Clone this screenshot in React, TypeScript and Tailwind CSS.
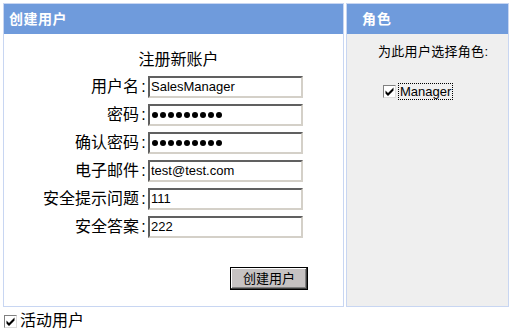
import React from "react";

const cjk = { fontFamily: '"Liberation Sans", "Noto Sans CJK SC", sans-serif' };

function Check({ className = "" }: { className?: string }) {
  return (
    <div
      className={
        "w-[13px] h-[13px] bg-white border border-t-[#808080] border-l-[#808080] border-b-[#dcdcdc] border-r-[#dcdcdc] flex items-center justify-center " +
        className
      }
    >
      <svg width="9" height="9" viewBox="0 0 9 9">
        <path d="M0.5 3.5 L3 6 L8.5 0.5 L8.5 3.5 L3 9 L0.5 6.5 Z" fill="#000" />
      </svg>
    </div>
  );
}

function Field({ label, children }: { label: string; children: React.ReactNode }) {
  return (
    <div className="flex items-center h-[28px]">
      <div className="w-[144px] flex justify-end items-center text-[16px] leading-none text-black">
        <span>{label}</span>
        <span className="w-[9px] text-center">:</span>
      </div>
      <div
        className="w-[155px] h-[22px] bg-white border-2 border-t-[#606060] border-l-[#606060] border-b-[#d4d0c8] border-r-[#d4d0c8] flex items-center pl-[1px] text-[13px] text-black"
        style={{ fontFamily: '"Liberation Sans", Arial, sans-serif' }}
      >
        {children}
      </div>
    </div>
  );
}

function Dots() {
  return (
    <div className="flex gap-[2px] pl-[1px]">
      {Array.from({ length: 9 }).map((_, i) => (
        <span key={i} className="w-[6px] h-[6px] rounded-full bg-black" />
      ))}
    </div>
  );
}

export default function App() {
  return (
    <div className="w-[516px] h-[336px] bg-white p-[3px]" style={cjk}>
      <div className="flex gap-[2px]">
        <div className="w-[341px] h-[304px] border border-[#c8d6f2] bg-white flex flex-col">
          <div className="h-[30px] bg-[#6f9bdc] flex items-center pl-[5px] text-white font-bold text-[14px] tracking-[0.5px]">
            创建用户
          </div>
          <div className="flex flex-col">
            <div className="h-[26px] mt-[13px] text-[16px] leading-none flex items-center justify-center pl-[10px]">注册新账户</div>
            <div className="flex flex-col">
              <Field label="用户名">SalesManager</Field>
              <Field label="密码"><Dots /></Field>
              <Field label="确认密码"><Dots /></Field>
              <Field label="电子邮件">test@test.com</Field>
              <Field label="安全提示问题">111</Field>
              <Field label="安全答案">222</Field>
            </div>
            <div className="flex justify-end pr-[35px] mt-[26px]">
              <button className="w-[78px] h-[23px] border border-black bg-[#c6c2c2] text-[13px] leading-none text-black shadow-[inset_-1px_-1px_0_#404040,inset_1px_1px_0_#ffffff,inset_-2px_-2px_0_#808080]">
                创建用户
              </button>
            </div>
          </div>
        </div>
        <div className="w-[163px] h-[304px] border border-[#c8d6f2] bg-[#efefef] flex flex-col">
          <div className="h-[30px] bg-[#6f9bdc] flex items-center pl-[15px] text-white font-bold text-[14px] tracking-[1px]">
            角色
          </div>
          <div className="pl-[31px] mt-[9px] text-[13px] leading-none h-[16px] flex items-center tracking-[0.3px]">为此用户选择角色:</div>
          <div className="flex items-center pl-[36px] mt-[24px]">
            <Check />
            <span
              className="ml-[2px] text-[13px] leading-none px-[1px] py-[1px] border border-dotted border-black"
              style={{ fontFamily: '"Liberation Sans", Arial, sans-serif' }}
            >
              Manager
            </span>
          </div>
        </div>
      </div>
      <div className="flex items-center mt-[6px] pl-[1px]">
        <Check />
        <span className="ml-[3px] text-[16px] leading-none">活动用户</span>
      </div>
    </div>
  );
}
